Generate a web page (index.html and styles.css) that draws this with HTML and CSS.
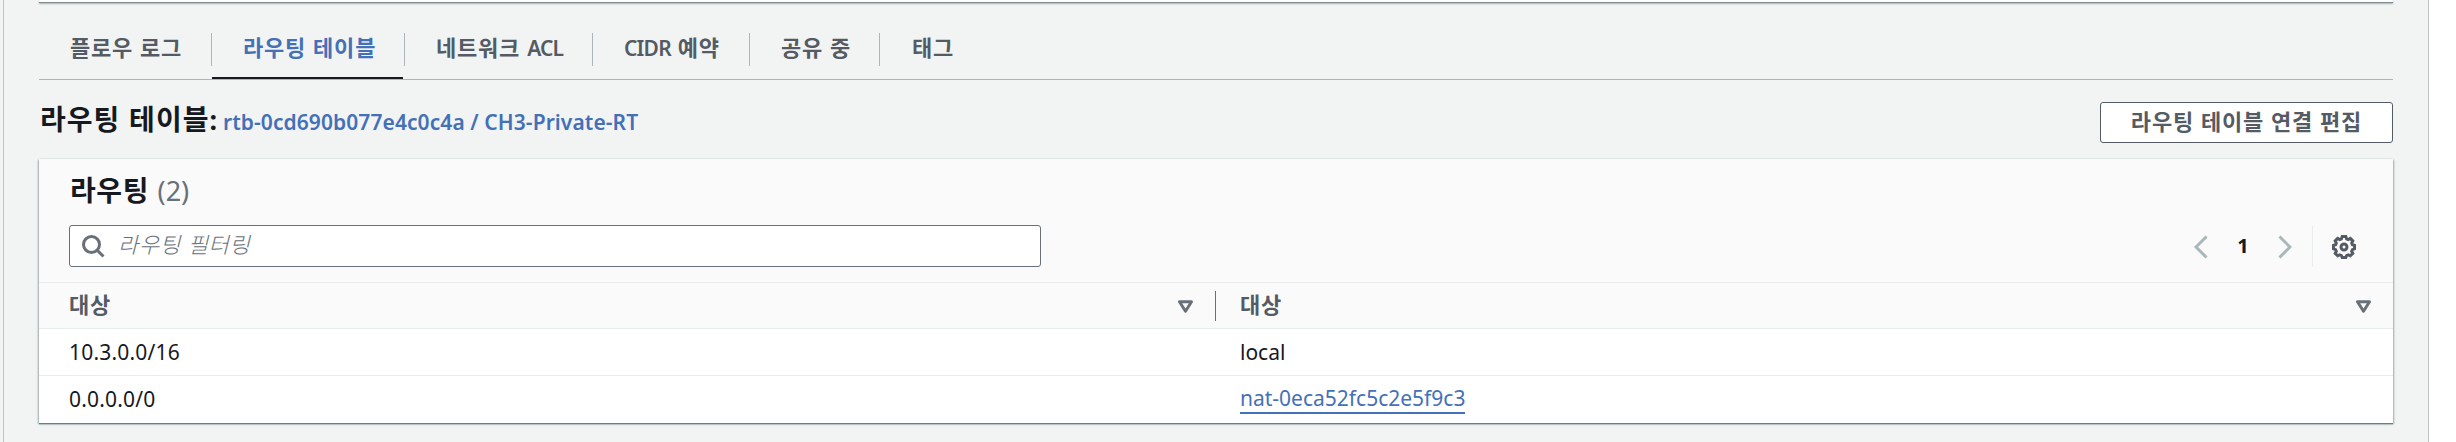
FILE: index.html
```html
<!DOCTYPE html>
<html lang="ko">
<head>
<meta charset="utf-8">
<title>라우팅 테이블</title>
<link rel="stylesheet" href="styles.css">
</head>
<body>
<main class="page">
  <div class="summary-panel"></div>
  <nav class="tabs">
    <a class="tab tab-flow"><span>플로우 로그</span></a>
    <a class="tab tab-route active"><span>라우팅 테이블</span></a>
    <a class="tab tab-acl"><span>네트워크 <b class="latin">ACL</b></span></a>
    <a class="tab tab-cidr"><span><b class="latin">CIDR</b> 예약</span></a>
    <a class="tab tab-share"><span>공유 중</span></a>
    <a class="tab tab-tag"><span>태그</span></a>
  </nav>
  <header class="title-row">
    <h2 class="title">라우팅 테이블<span class="colon">:</span><a class="title-link">rtb-0cd690b077e4c0c4a / CH3-Private-RT</a></h2>
    <button class="edit-button"><span>라우팅 테이블 연결 편집</span></button>
  </header>
  <section class="card">
    <div class="card-head">
      <h3 class="card-title">라우팅 <span class="count">(2)</span></h3>
      <div class="tools">
        <div class="search">
          <svg class="search-icon" viewBox="0 0 24 24"><circle cx="10.5" cy="10.5" r="8" /><path d="M16 16l6.5 6.5" /></svg>
          <span class="placeholder">라우팅 필터링</span>
        </div>
        <div class="pager">
          <svg class="chevron" viewBox="0 0 14 24"><path d="M12.5 1.5L2 12l10.500 10.500" /></svg>
          <span class="page-number">1</span>
          <svg class="chevron" viewBox="0 0 14 24"><path d="M1.500 1.500L12 12L1.500 22.500" /></svg>
          <span class="pager-divider"></span>
          <svg class="gear" viewBox="0 0 24 24"><path d="M10.200 1.500h3.600l.8 2.300 1.600.7 2.100-1.100 2.500 2.500-1.100 2.100.7 1.700 2.100.7v3.400l-2.100.8-.7 1.700 1.100 2.100-2.500 2.400-2.100-1-1.600.7-.8 2.100h-3.600l-.8-2.100-1.600-.7-2.100 1-2.500-2.400 1.100-2.100-.7-1.700-2.100-.8v-3.400l2.100-.7.7-1.700-1.100-2.100 2.500-2.500 2.100 1.100 1.600-.7z" /><circle cx="12" cy="12" r="3" /></svg>
        </div>
      </div>
    </div>
    <div class="row head-row">
      <div class="cell head-cell"><span>대상</span><svg class="sort" viewBox="0 0 15 13"><path d="M1.500 1.800h12l-6 9.400z" /></svg></div>
      <div class="cell head-cell"><span>대상</span><svg class="sort" viewBox="0 0 15 13"><path d="M1.500 1.800h12l-6 9.400z" /></svg></div>
    </div>
    <div class="row">
      <div class="cell"><span class="cidr">10.3.0.0/16</span></div>
      <div class="cell"><span class="local">local</span></div>
    </div>
    <div class="row last-row">
      <div class="cell"><span class="cidr">0.0.0.0/0</span></div>
      <div class="cell"><a class="nat">nat-0eca52fc5c2e5f9c3</a></div>
    </div>
  </section>
</main>
</body>
</html>
```
FILE: styles.css
```css
* { box-sizing: border-box; }
body {
  margin: 0;
  height: 442px;
  overflow: hidden;
  background: linear-gradient(to right, #f2f3f3 1200px, #fff 1200px);
  font: 21px/30px "Noto Sans", "Noto Sans CJK KR", sans-serif;
  color: #16191f;
}
.page {
  width: 2426px;
  height: 442px;
  margin-left: 3px;
  padding: 0 35px;
  border: solid #c0c4c5;
  border-width: 0 1px;
  background: #f2f4f3;
}
.summary-panel {
  height: 2px;
  background: #fff;
  box-shadow: 0 1px 1px #7b8589, 0 2px 2px #aab7b8;
}
.tabs {
  display: flex;
  height: 78px;
  padding-top: 31px;
  border-bottom: 1px solid #aab7b8;
}
.tab {
  height: 46px;
  font-weight: 600;
  font-size: 22px;
  font-family: "Noto Sans CJK KR", sans-serif;
  letter-spacing: 0.8px;
  color: #545b64;
  white-space: nowrap;
}
.tab span {
  display: block;
  height: 33px;
  padding-left: 31px;
  line-height: 27px;
  border-right: 1px solid #aab7b8;
}
.latin { font: 600 21px/27px "Noto Sans", sans-serif; letter-spacing: -0.8px; }
.tab-flow { width: 173px; }
.tab-route span { width: 193px; }
.tab-acl { width: 188px; }
.tab-cidr { width: 157px; }
.tab-share { width: 130px; }
.tab-tag span { padding-left: 32px; border: 0; }
.active { width: 191px; margin-right: 2px; color: #4470b8; border-bottom: 2px solid #16191f; }
.title-row {
  display: flex;
  justify-content: space-between;
  height: 79px;
  padding-top: 22px;
}
.title {
  margin: -2px 0 0;
  padding-left: 1px;
  font: 600 28px/36px "Noto Sans CJK KR", sans-serif;
  letter-spacing: 1px;
  white-space: nowrap;
}
.colon { font: 700 27px/36px "Noto Sans", sans-serif; letter-spacing: 0; margin-right: 6px; }
.title-link {
  font: 600 21px/36px "Noto Sans", sans-serif;
  letter-spacing: 0.08px;
  color: #4470b8;
}
.edit-button {
  width: 293px;
  height: 41px;
  padding: 0 0 5px;
  border: 1px solid #545b64;
  border-radius: 3px;
  background: #fff;
  color: #545b64;
  font: 600 22px/34px "Noto Sans CJK KR", sans-serif;
  letter-spacing: 0.8px;
  white-space: nowrap;
}
.card {
  height: 264px;
  background: #fff;
  box-shadow: 0 1px 1px #6f7b80, 1px 1px 2px #aab7b8, -1px 1px 2px #aab7b8, 0 -1px 0 #eaeded;
}
.card-head {
  height: 124px;
  padding: 12px 36px 0 30px;
  background: #fafafa;
  border-bottom: 1px solid #eaeded;
}
.card-title {
  height: 54px;
  margin: 0;
  padding-left: 1px;
  font: 600 28px/37px "Noto Sans CJK KR", sans-serif;
  letter-spacing: 0.6px;
}
.count { font: 400 27px/37px "Noto Sans", sans-serif; letter-spacing: 0; color: #687078; }
.tools { display: flex; justify-content: space-between; }
.search {
  display: flex;
  align-items: center;
  width: 972px;
  height: 42px;
  padding-left: 11px;
  border: 1px solid #687078;
  border-radius: 3px;
  background: #fff;
}
.search-icon { width: 24px; height: 24px; fill: none; stroke: #687078; stroke-width: 3; }
.placeholder {
  margin: -6px 0 0 13px;
  font: italic 300 22px/36px "Noto Sans CJK KR", sans-serif;
  letter-spacing: 0.7px;
  color: #687078;
}
.pager { display: flex; align-items: center; height: 42px; }
.chevron { width: 14px; height: 24px; margin-top: 1px; fill: none; stroke: #aab7b8; stroke-width: 3; }
.page-number { width: 70px; text-align: center; font-weight: 700; font-size: 20px; }
.pager-divider { width: 1px; height: 41px; margin: 0 19px 0 20px; background: #eaeded; }
.gear { width: 24px; height: 24px; margin: 1px 1px 0 0; fill: none; stroke: #545b64; stroke-width: 3; }
.row {
  display: grid;
  grid-template-columns: 1177px 1177px;
  height: 47px;
  border-bottom: 1px solid #eaeded;
}
.head-row { height: 46px; background: #fafafa; }
.last-row { border: 0; }
.cell { display: flex; align-items: center; padding: 0 22px 0 30px; }
.cell + .cell { padding-left: 24px; }
.head-cell {
  justify-content: space-between;
  height: 30px;
  margin-top: 8px;
  font: 600 22px/30px "Noto Sans CJK KR", sans-serif;
  letter-spacing: 0.8px;
  color: #545b64;
}
.head-cell:first-child { border-right: 1px solid #687078; }
.head-cell span { margin-top: -7px; }
.sort { width: 15px; height: 13px; fill: none; stroke: #687078; stroke-width: 3; stroke-linejoin: round; }
.cidr { margin-top: -1px; letter-spacing: 0.2px; }
.local { margin-top: -1px; }
.nat { height: 30px; margin-top: -1px; line-height: 28px; color: #4470b8; border-bottom: 2px solid #4470b8; }
```
